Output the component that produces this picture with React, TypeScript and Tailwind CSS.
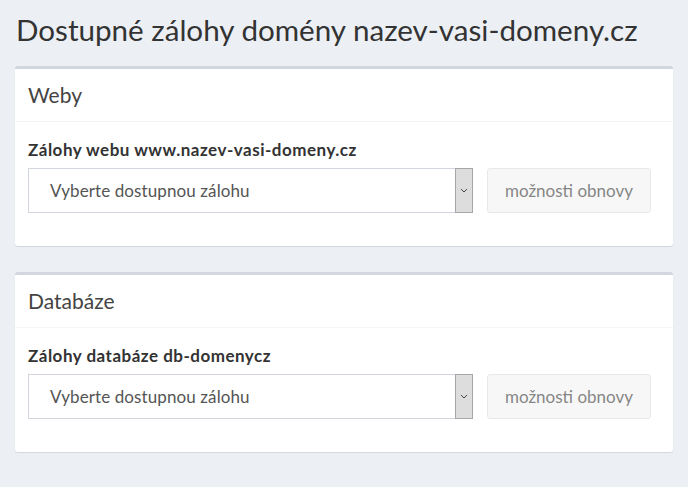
import React from "react";

function SelectBox() {
  return (
    <div className="flex h-[45px] w-[445px] items-stretch border border-[#d2d6de] bg-white">
      <div className="flex flex-1 items-center pl-[21px] text-[17px] tracking-[0.1px] text-[#555]">Vyberte dostupnou zálohu</div>
      <div className="-my-px -mr-px flex w-[18px] items-center justify-center border border-[#a6a6a6] bg-[#dddddd]">
        <svg width="8" height="5" viewBox="0 0 8 5" fill="none">
          <path d="M1 1l3 3 3-3" stroke="#444" strokeWidth="1" />
        </svg>
      </div>
    </div>
  );
}

function Box({ title, label }: { title: string; label: string }) {
  return (
    <div className="rounded-[3px] border-t-[3px] border-[#d2d6de] bg-white shadow-[0_1px_1px_rgba(0,0,0,0.1)]">
      <div className="flex h-[53px] items-center border-b border-[#f4f4f4] px-[13px] text-[21px] text-[#444]">{title}</div>
      <div className="px-[13px] pt-[18px] pb-[33px]">
        <div className="mb-[8px] text-[17px] font-bold leading-[20px] tracking-[0.5px] text-[#333]">{label}</div>
        <div className="flex items-center gap-[14px]">
          <SelectBox />
          <div className="flex h-[45px] w-[164px] items-center justify-center rounded-[3px] border border-[#ddd] bg-[#f4f4f4] text-[17px] text-[#444] opacity-65">
            možnosti obnovy
          </div>
        </div>
      </div>
    </div>
  );
}

export default function App() {
  return (
    <div className="h-[487px] w-[688px] bg-[#ecf0f5] px-[15px]" style={{ fontFamily: "Lato, 'Noto Sans', sans-serif" }}>
      <h1 className="pt-[12px] pl-px text-[29.6px] leading-[36px] text-[#333]">Dostupné zálohy domény nazev-vasi-domeny.cz</h1>
      <div className="mt-[18px] flex flex-col gap-[26px]">
        <Box title="Weby" label="Zálohy webu www.nazev-vasi-domeny.cz" />
        <Box title="Databáze" label="Zálohy databáze db-domenycz" />
      </div>
    </div>
  );
}
